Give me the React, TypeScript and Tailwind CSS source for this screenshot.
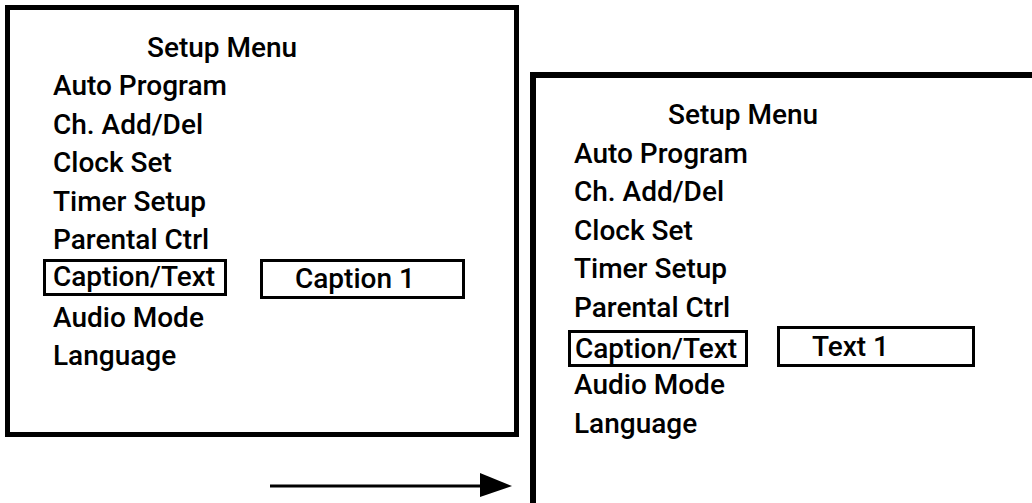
import * as React from "react";

const items = [
  "Auto Program",
  "Ch. Add/Del",
  "Clock Set",
  "Timer Setup",
  "Parental Ctrl",
  "Caption/Text",
  "Audio Mode",
  "Language",
];

type MenuProps = {
  value: string;
  className: string;
  selClass: string;
  valueClass: string;
};

function SetupMenu({ value, className, selClass, valueClass }: MenuProps) {
  return (
    <div className={`border-black bg-white ${className}`}>
      <div className="h-[38.6px] pl-[94px] leading-[38.6px]">Setup Menu</div>
      {items.map((label) =>
        label === "Caption/Text" ? (
          <div key={label} className="flex h-[38.6px] items-center">
            <span className={`box-border flex items-center border-black leading-none ${selClass}`}>
              {label}
            </span>
            <span className={`box-border flex items-center border-[3px] border-black leading-none ${valueClass}`}>
              {value}
            </span>
          </div>
        ) : (
          <div key={label} className="h-[38.6px] leading-[38.6px]">
            {label}
          </div>
        ),
      )}
    </div>
  );
}

export default function App() {
  return (
    <div className="flex h-[503px] w-[1032px] items-start overflow-hidden bg-white font-['Roboto',sans-serif] text-[28px] font-medium text-black">
      <div className="ml-[5px] mt-[5px] flex shrink-0 flex-col">
        <SetupMenu
          value="Caption 1"
          className="h-[432px] w-[514px] border-[5px] pl-[43px] pt-[18.5px]"
          selClass="-ml-[10px] h-[37px] w-[184px] border-[3px] pl-[7px] translate-y-[-2px]"
          valueClass="ml-[33px] h-[40px] w-[205px] pl-[32px]"
        />
        <svg className="ml-[265px] mt-[36px]" width="242" height="24" viewBox="0 0 242 24">
          <line x1="0" y1="13" x2="212" y2="13" stroke="black" strokeWidth="3" />
          <polygon points="210,0 242,13 210,24" fill="black" />
        </svg>
      </div>
      <SetupMenu
        value="Text 1"
        className="ml-[11px] mt-[72px] h-[440px] w-[530px] shrink-0 border-[6px] pl-[38px] pt-[18px]"
        selClass="-ml-[6px] h-[37px] w-[180px] border-[3px] pl-[4px] translate-y-[2px]"
        valueClass="ml-[29px] h-[41px] w-[198px] pl-[32px]"
      />
    </div>
  );
}
